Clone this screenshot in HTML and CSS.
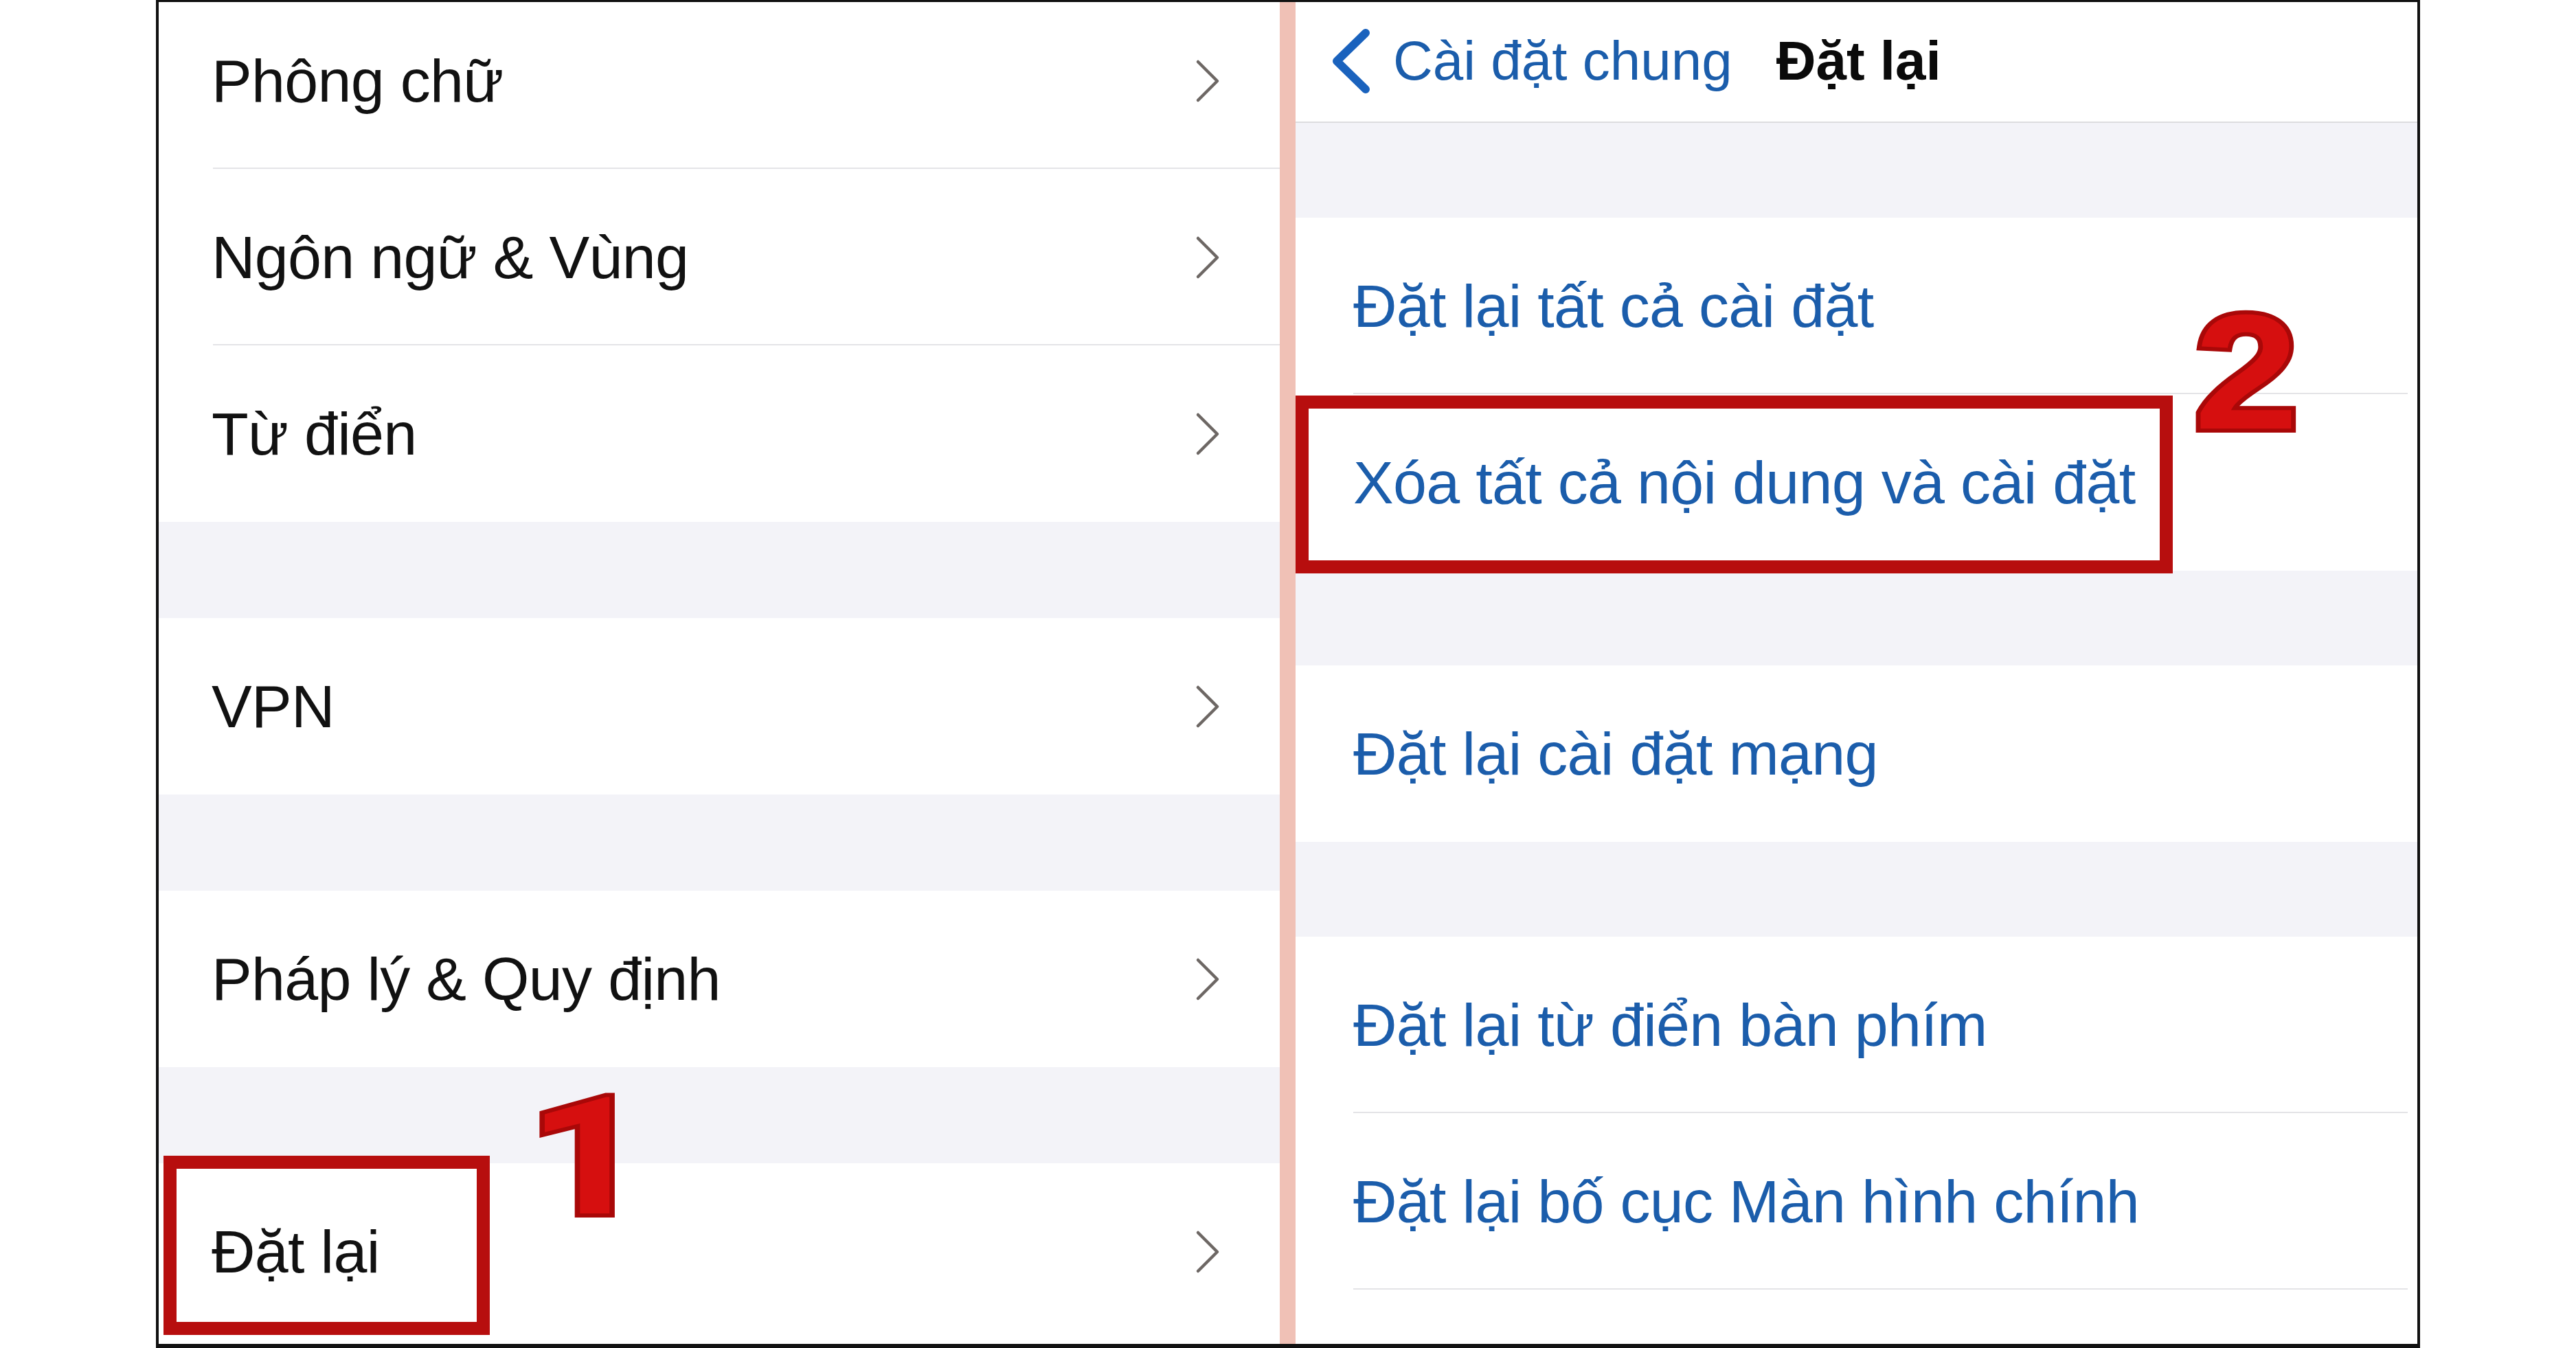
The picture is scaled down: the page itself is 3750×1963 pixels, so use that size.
FILE: index.html
```html
<!DOCTYPE html>
<html lang="vi">
<head>
    <meta charset="UTF-8">
    <meta name="viewport" content="width=device-width, initial-scale=1.0">
    <title>Đặt lại</title>
    <link rel="stylesheet" href="styles.css">
</head>
<body>
    <div class="frame">
        <section class="panel left">
            <ul class="group first">
                <li class="row"><span>Phông chữ</span><svg class="chev" viewBox="0 0 40 64"><path d="M6 4 L34 32 L6 60"/></svg></li>
                <li class="row"><span>Ngôn ngữ &amp; Vùng</span><svg class="chev" viewBox="0 0 40 64"><path d="M6 4 L34 32 L6 60"/></svg></li>
                <li class="row"><span>Từ điển</span><svg class="chev" viewBox="0 0 40 64"><path d="M6 4 L34 32 L6 60"/></svg></li>
            </ul>
            <div class="gap"></div>
            <ul class="group">
                <li class="row"><span>VPN</span><svg class="chev" viewBox="0 0 40 64"><path d="M6 4 L34 32 L6 60"/></svg></li>
            </ul>
            <div class="gap"></div>
            <ul class="group">
                <li class="row"><span>Pháp lý &amp; Quy định</span><svg class="chev" viewBox="0 0 40 64"><path d="M6 4 L34 32 L6 60"/></svg></li>
            </ul>
            <div class="gap"></div>
            <ul class="group">
                <li class="row"><span>Đặt lại</span><svg class="chev" viewBox="0 0 40 64"><path d="M6 4 L34 32 L6 60"/></svg></li>
            </ul>
        </section>

        <div class="divider"></div>

        <section class="panel right">
            <header class="nav">
                <svg class="back" viewBox="0 0 58 94"><path d="M50 6 L8 47 L50 88"/></svg>
                <span class="back-label">Cài đặt chung</span>
                <span class="title">Đặt lại</span>
            </header>
            <div class="gap"></div>
            <ul class="group">
                <li class="row link">Đặt lại tất cả cài đặt</li>
                <li class="row link">Xóa tất cả nội dung và cài đặt</li>
            </ul>
            <div class="gap"></div>
            <ul class="group">
                <li class="row link">Đặt lại cài đặt mạng</li>
            </ul>
            <div class="gap"></div>
            <ul class="group">
                <li class="row link">Đặt lại từ điển bàn phím</li>
                <li class="row link">Đặt lại bố cục Màn hình chính</li>
                <li class="row link"></li>
            </ul>
        </section>

        <!-- annotations -->
        <div class="mark mark-one"></div>
        <div class="mark mark-two"></div>
        <span class="step step-one">1</span>
        <span class="step step-two">2</span>
    </div>
</body>
</html>
```

FILE: styles.css
```css
body {
    margin: 0;
    background: #ffffff;
    font-family: "Liberation Sans", Arial, sans-serif;
}
.frame {
    position: relative;
    display: flex;
    box-sizing: border-box;
    width: 3296px;
    height: 1963px;
    margin-left: 227px;
    border: 4px solid #111111;
    border-top-width: 3px;
    border-bottom-width: 6px;
    overflow: hidden;
    background: #ffffff;
}
.panel {
    display: flex;
    flex-direction: column;
    background: #ffffff;
}
.panel.left {
    width: 1632px;
    flex: none;
}
.panel.right {
    flex: 1;
}
.divider {
    width: 23px;
    flex: none;
    background: #f0c1b6;
}
.group {
    list-style: none;
    margin: 0;
    padding: 0;
    flex: none;
}
.group.first {
    margin-top: -14px;
}
.row {
    position: relative;
    display: flex;
    align-items: center;
    justify-content: space-between;
    box-sizing: border-box;
    height: 257px;
    padding: 0 85px 0 77px;
    font-size: 88px;
    letter-spacing: -0.7px;
    color: #111111;
}
.row::after {
    content: "";
    position: absolute;
    left: 79px;
    right: 0;
    bottom: 0;
    height: 2px;
    background: #e4e4e7;
}
.group .row:last-child::after {
    display: none;
}
.chev {
    width: 40px;
    height: 64px;
    flex: none;
}
.chev path {
    fill: none;
    stroke: #6d6764;
    stroke-width: 4.5;
    stroke-linecap: round;
    stroke-linejoin: round;
}
.gap {
    height: 140px;
    flex: none;
    background: #f3f3f8;
}
.right .gap {
    height: 138px;
}
.right .row {
    padding-left: 84px;
}
.right .row::after {
    left: 84px;
    right: 14px;
}
.right .group:last-child .row:nth-child(2)::after {
    display: block;
}
.link {
    color: #1b5dab;
}
.nav {
    display: flex;
    align-items: center;
    box-sizing: border-box;
    height: 176px;
    padding-left: 52px;
    padding-bottom: 2px;
    border-bottom: 2px solid #dcdcdf;
    font-size: 80px;
    flex: none;
}
.back {
    width: 58px;
    height: 94px;
    flex: none;
}
.back path {
    fill: none;
    stroke: #1a62bd;
    stroke-width: 12;
    stroke-linecap: round;
    stroke-linejoin: round;
}
.back-label {
    margin-left: 32px;
    color: #1b5dab;
}
.title {
    margin-left: 64px;
    font-weight: bold;
    color: #0a0a0a;
}
.mark {
    position: absolute;
    box-sizing: border-box;
    border: 19px solid #b70e0e;
}
.mark-one {
    left: 7px;
    top: 1680px;
    width: 475px;
    height: 261px;
}
.mark-two {
    left: 1655px;
    top: 573px;
    width: 1277px;
    height: 259px;
}
.step {
    position: absolute;
    font-family: "Liberation Sans", Arial, sans-serif;
    font-weight: bold;
    font-size: 238px;
    line-height: 1;
    color: #d60f0f;
    -webkit-text-stroke: 12px #a90808;
    paint-order: stroke fill;
    transform-origin: left top;
}
.step-one {
    left: 537px;
    top: 1564px;
    font-family: Roboto, "Liberation Sans", sans-serif;
    transform: scaleX(1.28);
}
.step-two {
    left: 2963px;
    top: 420px;
    transform: scaleX(1.15);
}
```
